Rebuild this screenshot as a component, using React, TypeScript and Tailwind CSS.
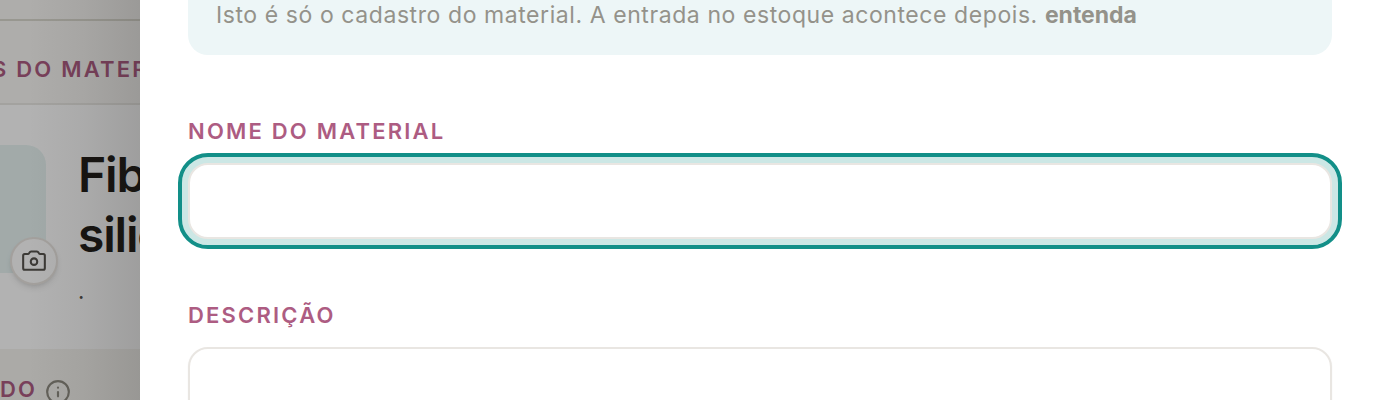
import { Info } from "lucide-react";
import type { ReactNode } from "react";

function CameraIcon() {
  return (
    <svg
      viewBox="0 0 24 24"
      className="size-[26px]"
      fill="none"
      stroke="currentColor"
      strokeWidth="1.9"
      strokeLinecap="round"
      strokeLinejoin="round"
      aria-hidden="true"
    >
      <path d="M3.4 5.6h2.9c.5 0 .9-.3 1.1-.7l.5-.8c.3-.6.8-.9 1.4-.9h5.4c.6 0 1.1.3 1.4.9l.5.8c.2.4.6.7 1.1.7h2.9c.8 0 1.4.6 1.4 1.4v11.6c0 .8-.6 1.4-1.4 1.4H3.4c-.8 0-1.4-.6-1.4-1.4V7c0-.8.6-1.4 1.4-1.4z" />
      <circle cx="12" cy="12.6" r="3" />
    </svg>
  );
}

function FieldLabel({ htmlFor, children }: { htmlFor: string; children: ReactNode }) {
  return (
    <label
      htmlFor={htmlFor}
      className="block text-[22px] leading-8 font-semibold tracking-widest text-[#ad5c82] uppercase"
    >
      {children}
    </label>
  );
}

function MaterialPage() {
  return (
    <main className="overflow-hidden whitespace-nowrap bg-[#f9f8f5]">
      <div className="h-[21px] border-b-2 border-[#dad8cf]" />
      <h2 className="-ml-2 pt-8 pb-[18px] text-[22px] leading-8 font-semibold tracking-widest text-[#ad5c82]">
        S DO MATERIAL
      </h2>

      {/* Cartão do material */}
      <section className="flex gap-8 border-t-2 border-[#eae8e4] bg-white pt-10 pb-[42px]">
        <div className="relative -ml-20 h-32 w-[126px] shrink-0 rounded-[20px] bg-[#e8f4f3]">
          <button
            type="button"
            aria-label="Foto"
            className="absolute -right-3 -bottom-3 flex size-12 items-center justify-center rounded-full border-2 border-[#eae6e1] bg-white text-[#57534e] shadow-md"
          >
            <CameraIcon />
          </button>
        </div>
        <div>
          <h1 className="text-5xl leading-[60px] font-semibold tracking-tight text-[#221e19]">
            Fibra
            <br />
            siliconada
          </h1>
          <p className="mt-2.5 text-[22px] leading-8 text-[#57534e]">.</p>
        </div>
      </section>

      <section className="bg-[#f5f4f0] py-6">
        <div className="flex gap-2 text-[22px] leading-8 font-semibold tracking-widest text-[#ad5c82]">
          DO
          <Info size={26} strokeWidth={2} className="mt-1.5 text-[#8f8c82]" />
        </div>
      </section>
    </main>
  );
}

function MaterialDrawer() {
  return (
    <aside className="min-w-0 flex-1 bg-white px-12">
      <div className="rounded-b-[20px] bg-[#edf6f7] px-7 pb-[25px] text-[23px] leading-[30px] tracking-wide text-[#94928a]">
        Isto é só o cadastro do material. A entrada no estoque acontece depois.{" "}
        <a href="#" className="font-bold tracking-normal">
          entenda
        </a>
      </div>

      <form className="flex flex-col gap-[60px] pt-[60px]">
        <div className="flex flex-col gap-4">
          <FieldLabel htmlFor="nome">Nome do material</FieldLabel>
          <input
            id="nome"
            type="text"
            className="h-[76px] w-full rounded-[20px] border-2 border-[#e9e6e2] bg-white px-6 text-2xl ring-6 ring-[#cce7e5] outline-4 outline-offset-6 outline-[#128f88]"
          />
        </div>
        <div className="flex flex-col gap-4">
          <FieldLabel htmlFor="descricao">Descrição</FieldLabel>
          <textarea
            id="descricao"
            rows={4}
            className="w-full resize-none rounded-[20px] border-2 border-[#e9e6e2] bg-white px-6 py-4 text-2xl shadow-xs outline-none"
          />
        </div>
      </form>
    </aside>
  );
}

export default function App() {
  return (
    <div className="relative h-screen overflow-hidden font-['Inter',sans-serif]">
      <MaterialPage />
      <div className="absolute inset-0 flex bg-black/30">
        <div className="flex w-[140px] shrink-0 justify-end">
          <div className="w-28 bg-linear-to-l from-[#1c1917]/13 via-[#1c1917]/5 to-transparent" />
        </div>
        <MaterialDrawer />
      </div>
    </div>
  );
}
